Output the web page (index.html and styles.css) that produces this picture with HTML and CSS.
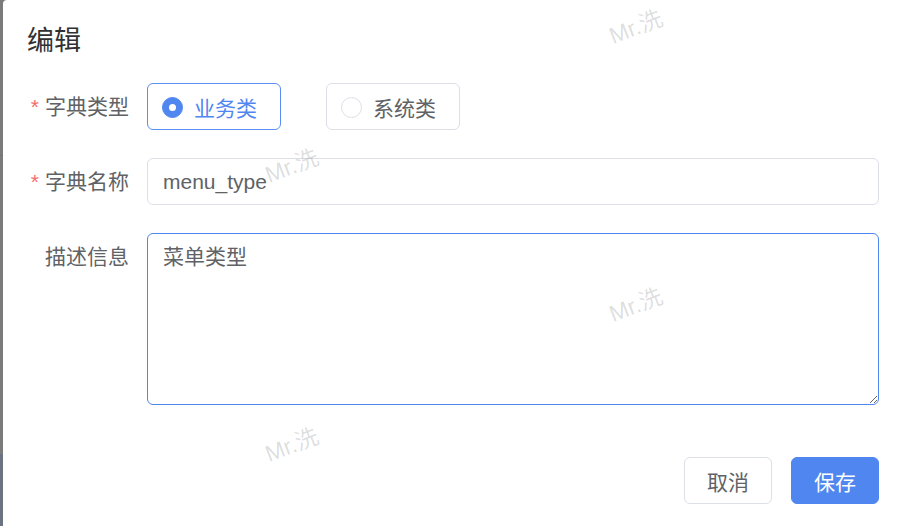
FILE: index.html
```html
<!DOCTYPE html>
<html lang="zh-CN">
<head>
<meta charset="utf-8">
<title>编辑</title>
<link rel="stylesheet" href="styles.css">
</head>
<body>
<div class="page">
  <div class="strip"></div>
  <div class="dialog">
    <header class="dialog-header"><span class="dialog-title">编辑</span></header>
    <form class="form">
      <div class="form-item">
        <label class="form-label required">字典类型</label>
        <div class="form-content">
          <label class="radio is-checked"><span class="radio-dot"></span><span class="radio-text">业务类</span></label>
          <label class="radio radio-second"><span class="radio-dot"></span><span class="radio-text">系统类</span></label>
        </div>
      </div>
      <div class="form-item">
        <label class="form-label required">字典名称</label>
        <div class="form-content">
          <input class="input" type="text" value="menu_type">
        </div>
      </div>
      <div class="form-item form-item-last">
        <label class="form-label">描述信息</label>
        <div class="form-content">
          <textarea class="textarea">菜单类型</textarea>
        </div>
      </div>
    </form>
    <footer class="dialog-footer">
      <button type="button" class="btn btn-default">取消</button>
      <button type="button" class="btn btn-primary">保存</button>
    </footer>
  </div>
  <span class="watermark wm-1">Mr.洗</span>
  <span class="watermark wm-2">Mr.洗</span>
  <span class="watermark wm-3">Mr.洗</span>
  <span class="watermark wm-4">Mr.洗</span>
</div>
</body>
</html>
```
FILE: styles.css
```css
* { box-sizing: border-box; }
html, body {
  margin: 0;
  padding: 0;
  width: 900px;
  height: 526px;
  overflow: hidden;
  background: #7a7a7a;
  font-family: "Liberation Sans", "Noto Sans CJK SC", sans-serif;
}
.page {
  position: relative;
  display: flex;
  width: 900px;
  height: 526px;
}
.strip {
  width: 3px;
  flex: none;
  background: linear-gradient(#7b7b7b 0, #7b7b7b 155px, #737373 155px, #737373 156px, #7b7b7b 156px, #7b7b7b 454px, #6c7380 454px);
}
.dialog {
  flex: 1;
  background: #fff;
  border-top-left-radius: 4px;
  padding: 21px 21px 22px 24px;
  display: flex;
  flex-direction: column;
}
.dialog-header {
  height: 40px;
  margin-bottom: 22px;
}
.dialog-title {
  font-size: 27px;
  line-height: 40px;
  color: #303133;
}
.form {
  display: flex;
  flex-direction: column;
}
.form-item {
  display: flex;
  margin-bottom: 28px;
}
.form-item-last { margin-bottom: 0; }
.form-label {
  width: 120px;
  flex: none;
  padding-right: 18px;
  text-align: right;
  font-size: 21px;
  line-height: 47px;
  color: #606266;
}
.form-label.required::before {
  content: "*";
  color: #f56c6c;
  margin-right: 6px;
}
.form-content {
  flex: 1;
  display: flex;
  align-items: flex-start;
}
.radio {
  display: inline-flex;
  align-items: center;
  width: 134px;
  height: 47px;
  border: 1px solid #dcdfe6;
  border-radius: 6px;
  padding: 2px 0 0 14px;
}
.radio-second { margin-left: 45px; }
.radio.is-checked { border-color: #5a8ef2; }
.radio-dot {
  position: relative;
  width: 21px;
  height: 21px;
  border: 1px solid #dcdfe6;
  border-radius: 50%;
  background: #fff;
  flex: none;
}
.is-checked .radio-dot {
  background: #4f86f0;
  border-color: #4f86f0;
}
.is-checked .radio-dot::after {
  content: "";
  position: absolute;
  left: 50%;
  top: 50%;
  width: 7px;
  height: 7px;
  margin: -3.5px 0 0 -3.5px;
  border-radius: 50%;
  background: #fff;
}
.radio-text {
  margin-left: 11px;
  font-size: 21px;
  color: #606266;
  margin-top: -2px;
}
.is-checked .radio-text { color: #4f86f0; }
.input {
  width: 100%;
  height: 47px;
  border: 1px solid #dcdfe6;
  border-radius: 6px;
  padding: 0 15px;
  font-family: "Liberation Sans", "Noto Sans CJK SC", sans-serif;
  font-size: 21px;
  color: #606266;
  outline: none;
  background: #fff;
}
.textarea {
  width: 100%;
  height: 172px;
  border: 1px solid #4f86f0;
  border-radius: 6px;
  padding: 7px 15px;
  font-family: "Liberation Sans", "Noto Sans CJK SC", sans-serif;
  font-size: 21px;
  line-height: 1.5;
  color: #606266;
  outline: none;
  resize: vertical;
  background: #fff;
  display: block;
}
.dialog-footer {
  margin-top: 52px;
  display: flex;
  justify-content: flex-end;
  gap: 19px;
}
.btn {
  width: 88px;
  height: 47px;
  border-radius: 6px;
  font-family: "Liberation Sans", "Noto Sans CJK SC", sans-serif;
  font-size: 21px;
  padding: 0;
  cursor: pointer;
}
.btn-default {
  background: #fff;
  border: 1px solid #dcdfe6;
  color: #606266;
}
.btn-primary {
  background: #4f86f0;
  border: 1px solid #4f86f0;
  color: #fff;
}
.watermark {
  position: absolute;
  font-size: 23px;
  color: rgba(0, 0, 0, 0.14);
  white-space: nowrap;
  pointer-events: none;
  transform: translate(-50%, -50%) rotate(-21deg);
}
.wm-1 { left: 635px; top: 25px; }
.wm-2 { left: 291px; top: 164px; }
.wm-3 { left: 635px; top: 303px; }
.wm-4 { left: 291px; top: 443px; }
```
